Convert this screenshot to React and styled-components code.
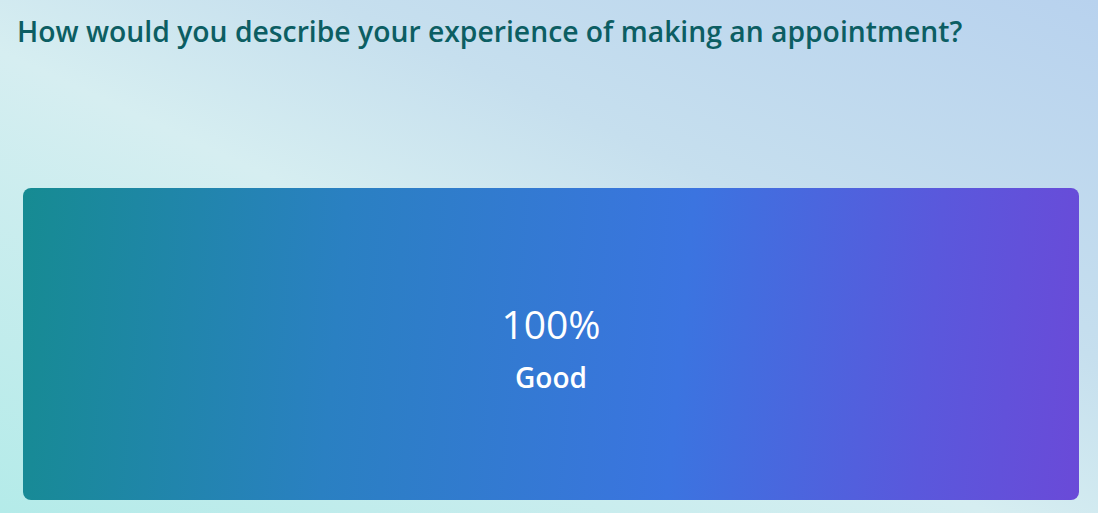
import React from "react";
import styled, { createGlobalStyle } from "styled-components";

const Global = createGlobalStyle`
  html, body { margin: 0; padding: 0; }
  body {
    width: 1098px;
    height: 513px;
    overflow: hidden;
    font-family: "Open Sans", "Noto Sans", sans-serif;
  }
`;

const Page = styled.div`
  box-sizing: border-box;
  width: 1098px;
  height: 513px;
  display: flex;
  flex-direction: column;
  padding: 12px 19px 13px 23px;
  background: linear-gradient(to top right, #b4ebe9 0%, #d6eef1 45%, #c6dfee 65%, #b8d2ee 100%);
`;

const Title = styled.h1`
  margin: 0 0 0 -6px;
  font-size: 28.3px;
  line-height: 38px;
  font-weight: 600;
  color: #0c5e63;
  letter-spacing: 0;
`;

const Card = styled.div`
  margin-top: 138px;
  flex: 1;
  border-radius: 8px;
  padding-top: 8px;
  display: flex;
  flex-direction: column;
  align-items: center;
  justify-content: center;
  color: #ffffff;
  background: linear-gradient(95deg, #168b92 0%, #2a80c2 30%, #3b74e0 62%, #5a58dc 85%, #6a4ad8 100%);
`;

const Percent = styled.div`
  font-size: 39px;
  line-height: 46px;
  font-weight: 400;
`;

const Label = styled.div`
  font-size: 28px;
  line-height: 36px;
  font-weight: 600;
  margin-top: 12px;
`;

export default function App() {
  return (
    <>
      <Global />
      <Page>
        <Title>How would you describe your experience of making an appointment?</Title>
        <Card>
          <Percent>100%</Percent>
          <Label>Good</Label>
        </Card>
      </Page>
    </>
  );
}
